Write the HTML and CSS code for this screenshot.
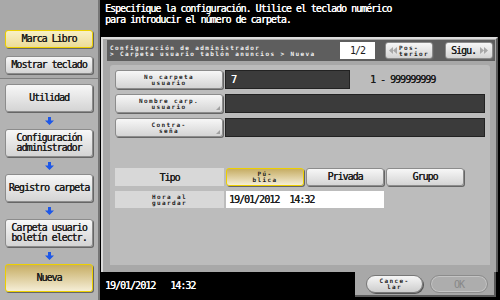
FILE: index.html
```html
<!DOCTYPE html>
<html lang="es">
<head>
    <meta charset="UTF-8">
    <meta name="viewport" content="width=device-width, initial-scale=1.0">
    <title>Carpeta usuario boletín electr. - Nueva</title>
    <link rel="stylesheet" href="styles.css">
</head>
<body>
    <div class="side">
        <div class="side-top">
            <div class="btn gold">Marca Libro</div>
            <div class="btn">Mostrar teclado</div>
        </div>
        <div class="side-path">
            <div class="btn step">Utilidad</div>
            <div class="arrow"><svg width="9" height="8" viewBox="0 0 9 8"><path d="M3 0h3v3.5h3L4.5 8 0 3.5h3z" fill="#1d57e8"/></svg></div>
            <div class="btn step">Configuración<br>administrador</div>
            <div class="arrow"><svg width="9" height="8" viewBox="0 0 9 8"><path d="M3 0h3v3.5h3L4.5 8 0 3.5h3z" fill="#1d57e8"/></svg></div>
            <div class="btn step">Registro carpeta</div>
            <div class="arrow"><svg width="9" height="8" viewBox="0 0 9 8"><path d="M3 0h3v3.5h3L4.5 8 0 3.5h3z" fill="#1d57e8"/></svg></div>
            <div class="btn step">Carpeta usuario<br>boletín electr.</div>
            <div class="arrow"><svg width="9" height="8" viewBox="0 0 9 8"><path d="M3 0h3v3.5h3L4.5 8 0 3.5h3z" fill="#1d57e8"/></svg></div>
            <div class="btn step gold-deep">Nueva</div>
        </div>
    </div>

    <div class="main">
        <div class="prompt">Especifique la configuración. Utilice el teclado numérico<br>para introducir el número de carpeta.</div>

        <div class="panel">
            <div class="crumbs">
                <div class="crumb-text mini">Configuración de administrador<br>&gt; Carpeta usuario tablón anuncios &gt; Nueva</div>
                <div class="page">1/2</div>
                <div class="btn nav prev">
                    <svg width="8" height="7" viewBox="0 0 8 7"><path d="M4 0v7L0 3.5zM8 0v7L4 3.5z" fill="#a8a8a8"/></svg>
                    <span class="mini">Pos-<br>terior</span>
                </div>
                <div class="btn nav next">
                    <span>Sigu.</span>
                    <svg width="8" height="7" viewBox="0 0 8 7"><path d="M0 0v7l4-3.5zM4 0v7l4-3.5z" fill="#a8a8a8"/></svg>
                </div>
            </div>

            <div class="inner">
                <div class="row">
                    <div class="btn key"><span class="mini">No carpeta<br>usuario</span></div>
                    <div class="field short">7</div>
                    <div class="range">1 - 999999999</div>
                </div>
                <div class="row">
                    <div class="btn key more"><span class="mini">Nombre carp.<br>usuario</span></div>
                    <div class="field long"></div>
                </div>
                <div class="row">
                    <div class="btn key more"><span class="mini">Contra-<br>seña</span></div>
                    <div class="field long"></div>
                </div>

                <div class="row type-row">
                    <div class="label">Tipo</div>
                    <div class="btn choice gold-deep"><span class="mini">Pú-<br>blica</span></div>
                    <div class="btn choice">Privada</div>
                    <div class="btn choice">Grupo</div>
                </div>
                <div class="row time-row">
                    <div class="label"><span class="mini">Hora al<br>guardar</span></div>
                    <div class="time-field">19/01/2012  14:32</div>
                </div>
            </div>
        </div>

        <div class="foot">
            <div class="clock">19/01/2012   14:32</div>
            <div class="actions">
                <div class="pill"><span class="mini">Cance-<br>lar</span></div>
                <div class="pill off">OK</div>
            </div>
        </div>
    </div>
</body>
</html>
```

FILE: styles.css
```css
body {
    margin: 0;
    width: 500px;
    height: 300px;
    overflow: hidden;
    display: flex;
    background: #000;
    font-family: "DejaVu Sans Mono", monospace;
    font-size: 10px;
    letter-spacing: -1px;
    color: #1b1b1b;
}
.mini {
    font-size: 6px;
    font-weight: bold;
    letter-spacing: 1.4px;
    line-height: 6px;
    text-shadow: none;
}

/* left column */
.side {
    width: 98px;
    border-right: 2px solid #767676;
    background: #b3b3b3;
    display: flex;
    flex-direction: column;
}
.side-top {
    height: 79px;
    box-sizing: border-box;
    padding: 30px 5px 0;
    display: flex;
    flex-direction: column;
    gap: 8px;
    background: #a9a9a9;
    border-bottom: 1px solid #7e7e7e;
}
.side-top .btn {
    height: 18px;
}
.side-path {
    padding: 5px 5px 0;
    display: flex;
    flex-direction: column;
}
.step {
    height: 28px;
}
.arrow {
    height: 17px;
    display: flex;
    align-items: center;
    justify-content: center;
}

/* buttons */
.btn {
    box-sizing: border-box;
    display: flex;
    align-items: center;
    justify-content: center;
    text-align: center;
    line-height: 10px;
    text-shadow: 0.25px 0 0 #1b1b1b;
    background: linear-gradient(#f7f7f7, #d4d4d4);
    border: 1px solid #8c8c8c;
    border-radius: 3px;
    box-shadow: 1px 1px 0 #666;
}
.gold {
    border-color: #eccf00;
    background: linear-gradient(#f8f0c6, #ecdc98);
}
.gold-deep {
    border-color: #eccf00;
    background: linear-gradient(#c6ad64, #f5eed6);
}

/* right side */
.main {
    width: 400px;
    display: flex;
    flex-direction: column;
}
.prompt {
    height: 37px;
    box-sizing: border-box;
    padding: 3px 5px 0;
    color: #fff;
    line-height: 11px;
    text-shadow: 0.25px 0 0 #fff;
}
.panel {
    height: 235px;
    width: 397px;
    margin-left: 1px;
    box-sizing: border-box;
    padding-top: 1px;
    background: #a8a8a8;
    border-top: 2px solid #dcdcdc;
    border-left: 2px solid #dcdcdc;
    border-right: 2px solid #5a5a5a;
}
.crumbs {
    height: 21px;
    margin: 0 1px 0 4px;
    padding-left: 3px;
    box-sizing: border-box;
    background: #5e5e5e;
    display: flex;
    align-items: center;
}
.crumb-text {
    flex: 1;
    color: #f2f2f2;
}
.page {
    width: 35px;
    height: 17px;
    margin-right: 10px;
    background: #fff;
    display: flex;
    align-items: center;
    justify-content: center;
}
.nav {
    width: 48px;
    height: 17px;
    margin-right: 12px;
    gap: 2px;
}
.prev {
    justify-content: flex-start;
    padding-left: 3px;
    text-align: left;
}
.next {
    margin-right: 2px;
    justify-content: space-between;
    padding: 0 4px 0 5px;
}

.inner {
    height: 200px;
    margin: 4px 6px 0 7px;
    padding: 5px;
    box-sizing: border-box;
    background: #bcbcbc;
    border-radius: 3px 3px 0 0;
    display: flex;
    flex-direction: column;
    gap: 5px;
}
.row {
    display: flex;
    align-items: center;
    gap: 2px;
    height: 19px;
}
.key {
    width: 108px;
    height: 19px;
    position: relative;
}
.more::after {
    content: "";
    position: absolute;
    right: 2px;
    bottom: 2px;
    border-left: 4px solid transparent;
    border-bottom: 4px solid #a0a0a0;
}
.field {
    height: 19px;
    box-sizing: border-box;
    padding-left: 5px;
    background: #3b3b3b;
    border: 1px solid #222;
    color: #fff;
    text-shadow: 0.3px 0 0 #fff;
    display: flex;
    align-items: center;
}
.short {
    width: 125px;
}
.long {
    flex: 1;
}
.range {
    margin-left: 18px;
    text-shadow: 0.25px 0 0 #1b1b1b;
}
.type-row {
    margin-top: 26px;
    height: 18px;
}
.time-row {
    height: 17px;
}
.label {
    width: 109px;
    height: 100%;
    background: #d8d8d8;
    text-shadow: 0.25px 0 0 #1b1b1b;
    display: flex;
    align-items: center;
    justify-content: center;
    text-align: center;
}
.choice {
    width: 78px;
    height: 18px;
}
.time-field {
    width: 158px;
    height: 17px;
    box-sizing: border-box;
    padding-left: 3px;
    background: #fff;
    white-space: pre;
    text-shadow: 0.25px 0 0 #1b1b1b;
    display: flex;
    align-items: center;
}

/* bottom */
.foot {
    height: 28px;
    display: flex;
}
.clock {
    width: 255px;
    box-sizing: border-box;
    padding: 8px 5px 0;
    color: #fff;
    white-space: pre;
    text-shadow: 0.25px 0 0 #fff;
}
.actions {
    width: 141px;
    height: 25px;
    box-sizing: border-box;
    padding: 3px 0 0 11px;
    background: #a8a8a8;
    border-right: 2px solid #5a5a5a;
    border-bottom: 2px solid #5a5a5a;
    display: flex;
    gap: 7px;
}
.pill {
    width: 57px;
    height: 18px;
    box-sizing: border-box;
    border-radius: 9px;
    border: 1px solid #777;
    background: linear-gradient(#f6f6f6, #cdcdcd);
    box-shadow: 1px 1px 0 #555;
    display: flex;
    align-items: center;
    justify-content: center;
    text-align: center;
}
.off {
    width: 58px;
    background: #adadad;
    border-color: #8c8c8c;
    box-shadow: inset 0 0 0 1px #c4c4c4;
    color: #888;
    text-shadow: none;
}
```
